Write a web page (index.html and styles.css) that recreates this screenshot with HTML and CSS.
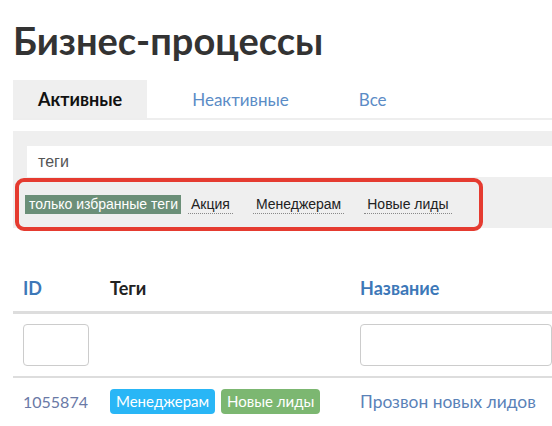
FILE: index.html
```html
<!DOCTYPE html>
<html lang="ru">
<head>
<meta charset="utf-8">
<title>Бизнес-процессы</title>
<link rel="stylesheet" href="styles.css">
</head>
<body>
<div class="page">
  <h1 class="title">Бизнес-процессы</h1>
  <div class="tabs">
    <span class="tab tab-active">Активные</span>
    <span class="tab">Неактивные</span>
    <span class="tab">Все</span>
  </div>
  <div class="filter">
    <div class="filter-input">теги</div>
    <div class="tag-row">
      <span class="fav">только избранные теги</span>
      <span class="tag-link">Акция</span>
      <span class="tag-link">Менеджерам</span>
      <span class="tag-link">Новые лиды</span>
    </div>
    <div class="highlight"></div>
  </div>
  <div class="table">
    <div class="row head">
      <div class="cell link">ID</div>
      <div class="cell">Теги</div>
      <div class="cell link">Название</div>
    </div>
    <div class="row filters">
      <div class="cell"><div class="box box-id"></div></div>
      <div class="cell"></div>
      <div class="cell"><div class="box box-name"></div></div>
    </div>
    <div class="row data">
      <div class="cell num">1055874</div>
      <div class="cell chips"><span class="chip chip-blue">Менеджерам</span><span class="chip chip-green">Новые лиды</span></div>
      <div class="cell name">Прозвон новых лидов</div>
    </div>
  </div>
</div>
</body>
</html>
```
FILE: styles.css
```css
html, body {
  margin: 0;
  padding: 0;
  background: #fff;
  overflow: hidden;
}
.page {
  padding-left: 13px;
  font-family: Lato, "Liberation Sans", sans-serif;
}
.title {
  margin: 0;
  padding-top: 18px;
  height: 80px;
  box-sizing: border-box;
  font-size: 38px;
  font-weight: 700;
  color: #333;
  line-height: 44px;
  white-space: nowrap;
}
.tabs {
  display: flex;
  gap: 20px;
  border-bottom: 2px solid #eee;
  height: 38px;
}
.tab {
  display: flex;
  align-items: center;
  padding: 0 25px;
  font-size: 17px;
  color: #5b8cc6;
}
.tab-active {
  background: #efefef;
  color: #111;
  font-weight: 700;
  font-size: 18px;
}
.filter {
  position: relative;
  margin-top: 11px;
  background: #efefef;
  height: 97px;
  padding: 15px 0 0 14px;
  box-sizing: border-box;
}
.filter-input {
  background: #fff;
  height: 31px;
  line-height: 31px;
  padding-left: 11px;
  font-family: "Liberation Sans", Arial, sans-serif;
  font-size: 16px;
  color: #555;
}
.tag-row {
  display: flex;
  align-items: center;
  margin-top: 18px;
  margin-left: -2px;
  font-family: "Liberation Sans", Arial, sans-serif;
  font-size: 14px;
}
.fav {
  background: #6b8f78;
  color: #fff;
  height: 19px;
  line-height: 19px;
  padding: 0 3px 0 4px;
  margin-right: 7px;
}
.tag-link {
  color: #222;
  border-bottom: 1px dotted #888;
  padding: 0 3px;
  line-height: 17px;
  margin-right: 20px;
}
.highlight {
  position: absolute;
  left: 2px;
  top: 47px;
  width: 468px;
  height: 53px;
  box-sizing: border-box;
  border: 4px solid #e53b30;
  border-radius: 9px;
}
.table {
  margin-top: 37px;
}
.row {
  display: grid;
  grid-template-columns: 87px 250px 1fr;
}
.cell {
  padding-left: 10px;
  display: flex;
  align-items: center;
  white-space: nowrap;
}
.head {
  height: 46px;
  font-weight: 700;
  font-size: 18px;
  color: #222;
  border-bottom: 3px solid #ddd;
}
.head .link {
  color: #3d78b8;
}
.filters {
  height: 62px;
  border-bottom: 2px solid #ddd;
}
.box {
  height: 42px;
  box-sizing: border-box;
  border: 1px solid #ccc;
  border-radius: 4px;
  background: #fff;
}
.box-id {
  width: 66px;
}
.box-name {
  width: 100%;
}
.data {
  height: 46px;
  font-size: 16px;
}
.num {
  color: #6a79a6;
}
.name {
  color: #5a82b8;
  font-size: 17.4px;
}
.chip {
  display: inline-block;
  height: 25px;
  line-height: 25px;
  border-radius: 4px;
  color: #fff;
  padding: 0 6px;
  font-size: 15px;
}
.chip-blue {
  background: #29b6f6;
}
.chip-green {
  background: #7cb771;
  margin-left: 6px;
}
```
